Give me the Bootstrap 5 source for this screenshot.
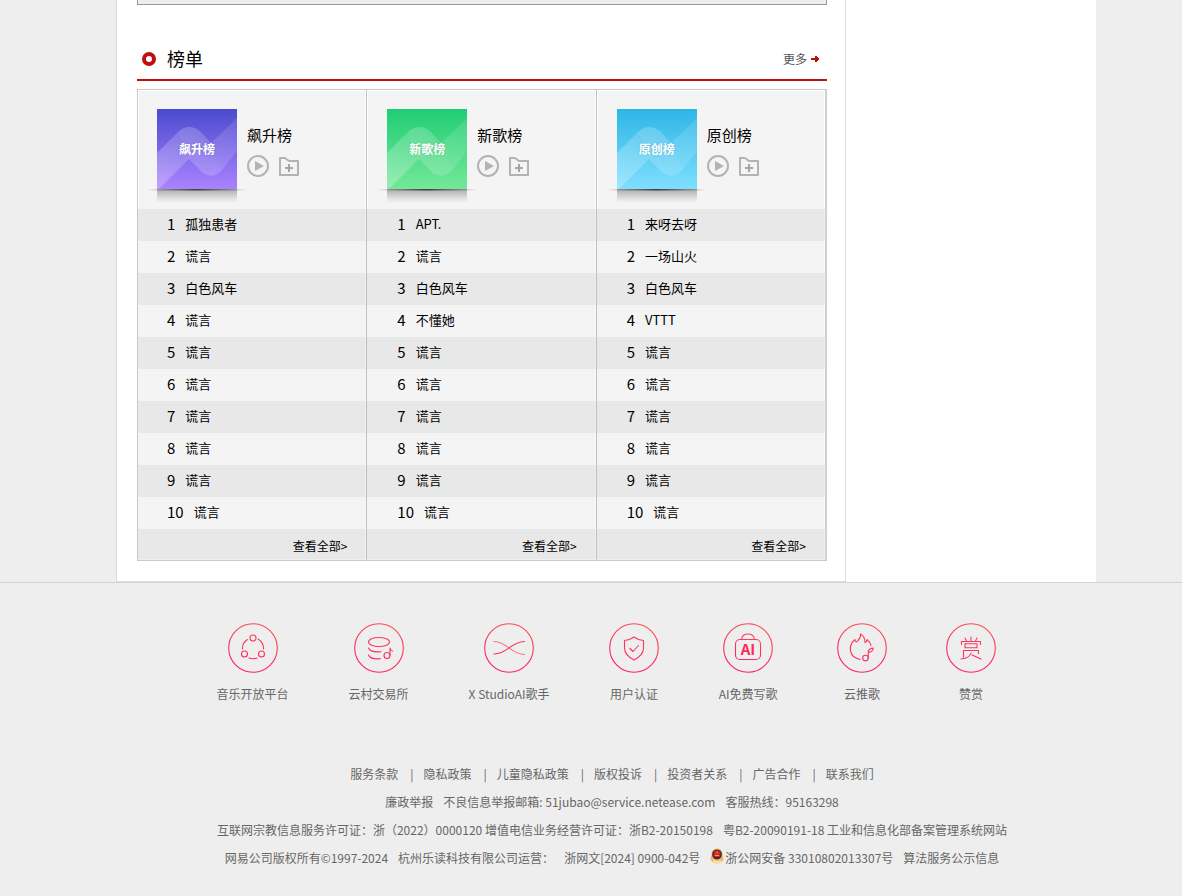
<!DOCTYPE html>
<html lang="zh-CN">
<head>
<meta charset="utf-8">
<meta name="viewport" content="width=device-width, initial-scale=1">
<title>榜单</title>
<link href="https://cdn.jsdelivr.net/npm/bootstrap@5.3.0/dist/css/bootstrap.min.css" rel="stylesheet">
<style>
body{font:12px/20px "Noto Sans CJK SC",sans-serif;background:#eee;color:#000}
a{color:inherit;text-decoration:none}
a:hover{text-decoration:underline}
.shell{padding-left:30px}
.wrap{max-width:980px}
.main-col{border:1px solid #dcdcdc;border-top:0;padding:0 18px 20px 20px;min-width:0}
.side-col{flex:0 0 250px}
.prev-block{height:5px;border:1px solid #999;border-top:0;background:#eee}
.sec-head{margin-top:33px;height:43px;padding:0 7px 0 5px;border-bottom:2px solid #c10d0c}
.sec-head h2{font-size:18px;line-height:24px;font-weight:400}
.sec-title{gap:11px}
.more{color:#555}
.more span{margin-top:3px}
.charts{margin-top:8px;border:solid #c8c8c8;border-width:1px 0}
.chart{flex:1 1 0;min-width:0;border-right:1px solid #c0c0c0;--indent:20px}
.chart:first-child{border-left:1px solid #c8c8c8;--indent:19px}
.chart:last-child{border-right:2px solid #d0d0d0}
.chart-head{height:119px;gap:10px;padding:19px 0 0 var(--indent);background:#f4f4f4;box-shadow:inset 1px 1px #fff,inset -1px 0 #fff}
.cover{width:80px;height:80px;position:relative;color:#fff;font-weight:700;background:linear-gradient(var(--from),var(--to))}
.cover svg{position:absolute;left:-10px;top:0}
.cover span{position:relative;text-shadow:0 0 3px rgba(0,0,0,.15)}
.chart-head h3{font-size:15px;line-height:20px;font-weight:400;margin-bottom:10px}
.ico{padding:0;border:0;background:none;line-height:0}
.chart li{height:32px;padding:0 0 2px calc(var(--indent) + 10px);font-size:13px;background:#f4f4f4;border-right:1px solid #f9f9f9}
.chart li:nth-child(odd){background:#e8e8e8;border-right-color:#eee}
.rank{font-size:15px;margin-right:10px}
.see-all{height:31px;padding:7px 19px 0 0;background:#e8e8e8;box-shadow:inset -1px -1px #f0f0f0;text-align:right}
.foot{border-top:1px solid #d3d3d3;color:#666;padding-top:40px;padding-bottom:27px}
.services{gap:60px}
.service{min-width:49px}
.service svg{margin:0 -1px;fill:none;stroke:url(#rose);stroke-width:1.1;stroke-linecap:round;stroke-linejoin:round}
.service span{margin-top:11px}
.legal{margin-top:60px;padding-left:12px}
.legal > div{column-gap:10px}
.legal .sep{margin:0 0 0 2px}
</style>
</head>
<body>
<svg width="0" height="0" class="position-absolute" aria-hidden="true">
<defs>
<linearGradient id="rose" gradientUnits="userSpaceOnUse" x1="35" y1="0" x2="15" y2="50"><stop offset="0" stop-color="#ff4d4d"/><stop offset="1" stop-color="#ff1a6c"/></linearGradient>
<linearGradient id="line" x1="0" x2="1"><stop offset="0" stop-color="#333" stop-opacity="0"/><stop offset=".5" stop-color="#333" stop-opacity=".9"/><stop offset="1" stop-color="#333" stop-opacity="0"/></linearGradient>
<linearGradient id="fade" x1="0" y1="0" x2="0" y2="1"><stop offset="0" stop-color="#777" stop-opacity=".6"/><stop offset="1" stop-color="#999" stop-opacity="0"/></linearGradient>
<linearGradient id="wave" x1="0" y1="1" x2="1" y2="0"><stop offset="0" stop-color="#fff" stop-opacity=".25"/><stop offset="1" stop-color="#fff" stop-opacity=".14"/></linearGradient>
<linearGradient id="ribbon" x1="0" y1="0" x2="1" y2="1"><stop offset="0" stop-color="#fff" stop-opacity=".1"/><stop offset="1" stop-color="#fff" stop-opacity="0.04"/></linearGradient>
<symbol id="cover-art" viewBox="0 0 100 96">
<path d="M10 44 31 23Q42 13 54 23L64 34 42 50 13 79 10 80Z" fill="url(#wave)"/>
<path d="M64 34 90 9V42L76 60Q67 71 56 64L42 50 54 40Z" fill="url(#wave)" opacity=".7"/>
<path d="M31 23Q42 13 54 23L76 60Q67 71 56 64L42 50Z" fill="url(#ribbon)" opacity=".5"/>
<path d="M10 80h80v14H10z" fill="url(#fade)"/><path d="M0 80h100v1.500H0z" fill="url(#line)"/>
</symbol>
<symbol id="play" viewBox="0 0 22 22"><circle cx="11" cy="11" r="10" fill="none" stroke="#b3b3b3" stroke-width="2"/><path d="M8 6v10l9-5z" fill="#b3b3b3"/></symbol>
<symbol id="folder" viewBox="0 0 20 20"><path d="M1 19V2h5l4 3h9v14z" fill="none" stroke="#b3b3b3" stroke-width="2" stroke-linejoin="round"/><path d="M10 8v8M6 12h8" stroke="#a5a5a5" stroke-width="2"/></symbol>
</defs>
</svg>

<div class="shell">
<div class="wrap mx-auto d-flex bg-white">
<main class="main-col flex-grow-1">
<div class="prev-block"></div>
<div class="sec-head d-flex justify-content-between">
<div class="sec-title d-flex pt-2 align-items-start">
<svg class="mt-1" width="14" height="22" viewBox="0 0 14 22" aria-hidden="true"><circle cx="7" cy="9" r="5" fill="none" stroke="#c10d0c" stroke-width="4"/></svg>
<h2 class="mb-0">榜单</h2>
</div>
<a href="#" class="more d-flex align-items-start pt-2"><span class="me-1">更多</span><svg class="mt-2" width="9" height="12" viewBox="0 0 9 12" aria-hidden="true"><path d="M0 4h4V2h2v1h1v1h1v2H7v1H6v1H4V6H0z" fill="#c10d0c"/></svg></a>
</div>

<div class="charts d-flex">
<section class="chart">
<div class="chart-head d-flex">
<a href="#" class="cover d-flex align-items-center justify-content-center" style="--from:#4b4ace;--to:#aa83ff"><svg width="100" height="96" aria-hidden="true"><use href="#cover-art"/></svg><span>飙升榜</span></a>
<div class="pt-3"><h3>飙升榜</h3>
<div class="d-flex gap-2"><button class="ico" aria-label="播放"><svg width="22" height="22"><use href="#play"/></svg></button><button class="ico" aria-label="收藏"><svg width="22" height="20" viewBox="-2 0 22 20"><use href="#folder" width="20" height="20"/></svg></button></div></div>
</div>
<ol class="list-unstyled mb-0">
<li class="d-flex align-items-center"><span class="rank">1</span><a href="#">孤独患者</a></li>
<li class="d-flex align-items-center"><span class="rank">2</span><a href="#">谎言</a></li>
<li class="d-flex align-items-center"><span class="rank">3</span><a href="#">白色风车</a></li>
<li class="d-flex align-items-center"><span class="rank">4</span><a href="#">谎言</a></li>
<li class="d-flex align-items-center"><span class="rank">5</span><a href="#">谎言</a></li>
<li class="d-flex align-items-center"><span class="rank">6</span><a href="#">谎言</a></li>
<li class="d-flex align-items-center"><span class="rank">7</span><a href="#">谎言</a></li>
<li class="d-flex align-items-center"><span class="rank">8</span><a href="#">谎言</a></li>
<li class="d-flex align-items-center"><span class="rank">9</span><a href="#">谎言</a></li>
<li class="d-flex align-items-center"><span class="rank">10</span><a href="#">谎言</a></li>
</ol>
<div class="see-all"><a href="#">查看全部&gt;</a></div>
</section>

<section class="chart">
<div class="chart-head d-flex">
<a href="#" class="cover d-flex align-items-center justify-content-center" style="--from:#20cd74;--to:#74e898"><svg width="100" height="96" aria-hidden="true"><use href="#cover-art"/></svg><span>新歌榜</span></a>
<div class="pt-3"><h3>新歌榜</h3>
<div class="d-flex gap-2"><button class="ico" aria-label="播放"><svg width="22" height="22"><use href="#play"/></svg></button><button class="ico" aria-label="收藏"><svg width="22" height="20" viewBox="-2 0 22 20"><use href="#folder" width="20" height="20"/></svg></button></div></div>
</div>
<ol class="list-unstyled mb-0">
<li class="d-flex align-items-center"><span class="rank">1</span><a href="#">APT.</a></li>
<li class="d-flex align-items-center"><span class="rank">2</span><a href="#">谎言</a></li>
<li class="d-flex align-items-center"><span class="rank">3</span><a href="#">白色风车</a></li>
<li class="d-flex align-items-center"><span class="rank">4</span><a href="#">不懂她</a></li>
<li class="d-flex align-items-center"><span class="rank">5</span><a href="#">谎言</a></li>
<li class="d-flex align-items-center"><span class="rank">6</span><a href="#">谎言</a></li>
<li class="d-flex align-items-center"><span class="rank">7</span><a href="#">谎言</a></li>
<li class="d-flex align-items-center"><span class="rank">8</span><a href="#">谎言</a></li>
<li class="d-flex align-items-center"><span class="rank">9</span><a href="#">谎言</a></li>
<li class="d-flex align-items-center"><span class="rank">10</span><a href="#">谎言</a></li>
</ol>
<div class="see-all"><a href="#">查看全部&gt;</a></div>
</section>

<section class="chart">
<div class="chart-head d-flex">
<a href="#" class="cover d-flex align-items-center justify-content-center" style="--from:#2eb6e6;--to:#7edfff"><svg width="100" height="96" aria-hidden="true"><use href="#cover-art"/></svg><span>原创榜</span></a>
<div class="pt-3"><h3>原创榜</h3>
<div class="d-flex gap-2"><button class="ico" aria-label="播放"><svg width="22" height="22"><use href="#play"/></svg></button><button class="ico" aria-label="收藏"><svg width="22" height="20" viewBox="-2 0 22 20"><use href="#folder" width="20" height="20"/></svg></button></div></div>
</div>
<ol class="list-unstyled mb-0">
<li class="d-flex align-items-center"><span class="rank">1</span><a href="#">来呀去呀</a></li>
<li class="d-flex align-items-center"><span class="rank">2</span><a href="#">一场山火</a></li>
<li class="d-flex align-items-center"><span class="rank">3</span><a href="#">白色风车</a></li>
<li class="d-flex align-items-center"><span class="rank">4</span><a href="#">VTTT</a></li>
<li class="d-flex align-items-center"><span class="rank">5</span><a href="#">谎言</a></li>
<li class="d-flex align-items-center"><span class="rank">6</span><a href="#">谎言</a></li>
<li class="d-flex align-items-center"><span class="rank">7</span><a href="#">谎言</a></li>
<li class="d-flex align-items-center"><span class="rank">8</span><a href="#">谎言</a></li>
<li class="d-flex align-items-center"><span class="rank">9</span><a href="#">谎言</a></li>
<li class="d-flex align-items-center"><span class="rank">10</span><a href="#">谎言</a></li>
</ol>
<div class="see-all"><a href="#">查看全部&gt;</a></div>
</section>
</div>
</main>
<aside class="side-col"></aside>
</div>
</div>

<footer class="foot shell">
<div class="wrap mx-auto">
<nav class="services d-flex justify-content-center">
<a href="#" class="service d-flex flex-column align-items-center"><svg width="50" height="50" viewBox="0 0 50 50"><circle cx="25" cy="25" r="24.3"/><circle cx="25" cy="15" r="3"/><circle cx="16.500" cy="31" r="3"/><circle cx="33.500" cy="31" r="3"/><path d="M19.500 16.500Q14 20 14.500 26M30 16Q36 20 35.500 26M21 35q4 1.500 8 0"/></svg><span>音乐开放平台</span></a>
<a href="#" class="service d-flex flex-column align-items-center"><svg width="50" height="50" viewBox="0 0 50 50"><circle cx="25" cy="25" r="24.300"/><ellipse cx="25" cy="19" rx="10.500" ry="4.500"/><path d="M14.500 25c1 3 5 4.300 12.500 3.700M14.500 32c1 3 5 4.300 12 3.700M36 32.500V25q0 2 2.500 3"/><circle cx="33" cy="32.500" r="3"/></svg><span>云村交易所</span></a>
<a href="#" class="service d-flex flex-column align-items-center"><svg width="50" height="50" viewBox="0 0 50 50"><circle cx="25" cy="25" r="24.300"/><path d="M10 31C24 31 26 19 40.500 18.500"/><path d="M10 18.500C24 19 26 31 40.500 31.500" opacity=".65"/></svg><span>X StudioAI歌手</span></a>
<a href="#" class="service d-flex flex-column align-items-center"><svg width="50" height="50" viewBox="0 0 50 50"><circle cx="25" cy="25" r="24.300"/><path d="M25 14q-4 3-9.500 3.500V25q0 7 9.500 12 9.500-5 9.500-12v-7.500Q29 17 25 14ZM21 25.500l3 3 5.500-6"/></svg><span>用户认证</span></a>
<a href="#" class="service d-flex flex-column align-items-center"><svg width="50" height="50" viewBox="0 0 50 50"><circle cx="25" cy="25" r="24.300"/><rect x="12.500" y="16.500" width="25" height="20" rx="4.500"/><path d="M18.500 16q1-5 6.500-5t6.500 5"/><text x="25" y="31.500" text-anchor="middle" font-size="15" font-weight="700" fill="#ff295f" stroke="none">AI</text></svg><span>AI免费写歌</span></a>
<a href="#" class="service d-flex flex-column align-items-center"><svg width="50" height="50" viewBox="0 0 50 50"><circle cx="25" cy="25" r="24.300"/><path d="M23 36.500c-11-2-12.500-13.500-5-20 .5 3 1.500 3 3 1 2-2 3-3.500 2.500-6.500 3 1.500 4.500 5 4.500 8.500 1-.5 2-1.500 2-3 2.500 2 3.500 4 4 6"/><circle cx="28.500" cy="35" r="2.800"/><path d="M31.300 35V28q1.500-3 5-3-.5 4-5 4.500"/></svg><span>云推歌</span></a>
<a href="#" class="service d-flex flex-column align-items-center"><svg width="50" height="50" viewBox="0 0 50 50"><circle cx="25" cy="25" r="24.300"/><path d="M25 14v4.500M19 15l1.500 3M31 15l-1.500 3M15.500 21.500v-3h19v3M19 20.800h12v4H19zM17.500 34v-6.500h15v3M25 30q-1 5-10 6M26 32l9 4"/></svg><span>赞赏</span></a>
</nav>
<div class="legal">
<div class="d-flex flex-wrap justify-content-center mb-2">
<a href="#">服务条款</a><span class="sep">|</span><a href="#">隐私政策</a><span class="sep">|</span><a href="#">儿童隐私政策</a><span class="sep">|</span><a href="#">版权投诉</a><span class="sep">|</span><a href="#">投资者关系</a><span class="sep">|</span><a href="#">广告合作</a><span class="sep">|</span><a href="#">联系我们</a>
</div>
<div class="d-flex flex-wrap justify-content-center mb-2"><a href="#">廉政举报</a><span>不良信息举报邮箱: <a href="#">51jubao@service.netease.com</a></span><span>客服热线：95163298</span></div>
<div class="d-flex flex-wrap justify-content-center mb-2"><span>互联网宗教信息服务许可证：浙（2022）0000120 增值电信业务经营许可证：浙B2-20150198</span><a href="#">粤B2-20090191-18 工业和信息化部备案管理系统网站</a></div>
<div class="d-flex flex-wrap justify-content-center"><span>网易公司版权所有©1997-2024</span><span>杭州乐读科技有限公司运营：</span><a href="#">浙网文[2024] 0900-042号</a><a href="#" class="d-flex"><svg width="15" height="16" viewBox="0 0 15 16" aria-hidden="true"><ellipse cx="7" cy="10.500" rx="6.500" ry="5" fill="#f0b75a"/><path d="M3 13q4 2 8 0" stroke="#fbe2a5" stroke-width="2" fill="none"/><circle cx="7" cy="6" r="5.500" fill="#e0a040"/><circle cx="7" cy="6.500" r="4.800" fill="#27245f"/><circle cx="7" cy="6" r="3.600" fill="#d8261c"/><path d="M5 7.500h4M7 3.500v2" stroke="#ffa03a" stroke-width="1"/></svg><span>浙公网安备 33010802013307号</span></a><a href="#">算法服务公示信息</a></div>
</div>
</div>
</footer>
<script src="https://cdn.jsdelivr.net/npm/bootstrap@5.3.0/dist/js/bootstrap.bundle.min.js"></script>
</body>
</html>
